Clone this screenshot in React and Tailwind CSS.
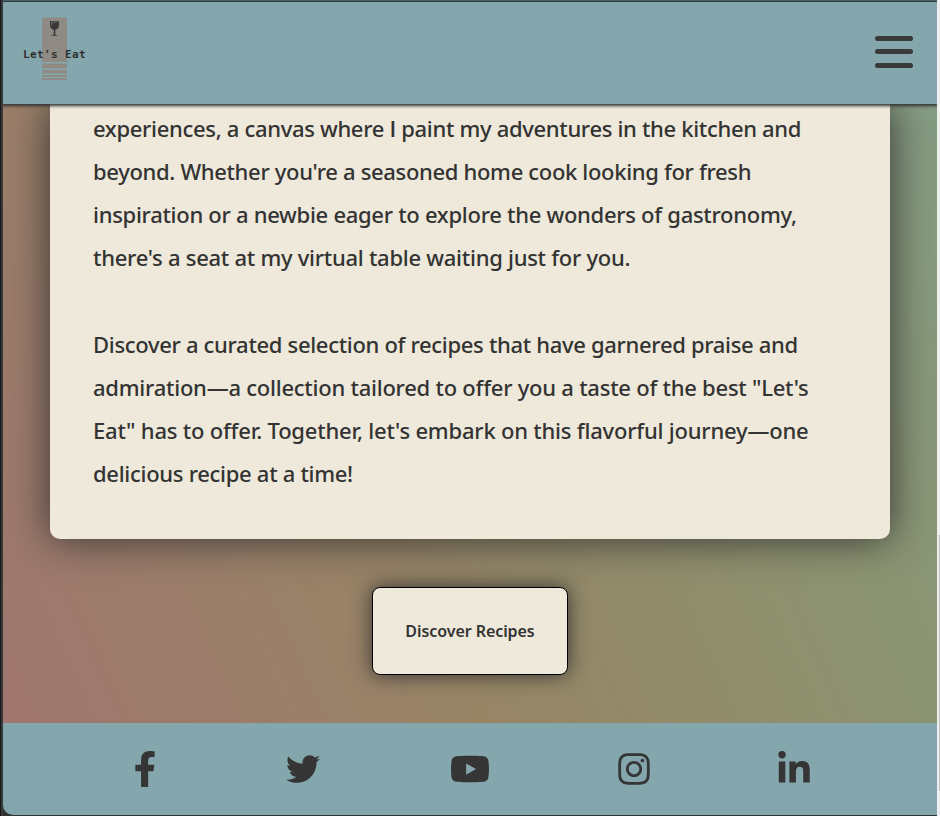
import { FaFacebookF, FaTwitter, FaYoutube, FaInstagram, FaLinkedinIn } from "react-icons/fa";

const intro = [
  ["beyond. Whether you're a seasoned home cook looking for fresh", "tracking-[-0.33px]"],
  ["inspiration or a newbie eager to explore the wonders of gastronomy,", "tracking-[-0.285px]"],
  ["there's a seat at my virtual table waiting just for you.", "tracking-[-0.265px]"],
];

const invite = [
  ["Discover a curated selection of recipes that have garnered praise and", "tracking-[-0.315px]"],
  ["admiration—a collection tailored to offer you a taste of the best \"Let's", "tracking-[-0.24px]"],
  ["Eat\" has to offer. Together, let's embark on this flavorful journey—one", "tracking-[-0.21px]"],
  ["delicious recipe at a time!", "tracking-[-0.29px]"],
];

function Paragraph({ lines }) {
  return (
    <p className="whitespace-nowrap">
      {lines.map(([text, tracking]) => (
        <span key={text} className="block h-[43px]">
          <span className={tracking}>{text}</span>
        </span>
      ))}
    </p>
  );
}

function Logo() {
  return (
    <svg className="mb-[9px] ml-[20px] h-[70px] w-[66px]" viewBox="0 0 66 70">
      <g fill="#8f8a83">
        <path d="M19 3.500h25v44.500H19zM19 49.500h25v5H19zM19 56h25v3.500H19zM19 61h25v2H19zM19 64h25v2H19z" />
      </g>
      <path d="M27.200 7h8.600c.7 4.800 0 8-3.500 8.700V20.500l2.700 1.200h-7.200L30.700 20.500v-4.800c-3.500-.7-4.200-3.900-3.500-8.700z" fill="#373737" />
      <path d="M28.700 8.500l-.2 3M28.500 8.200h6" stroke="#7f8b8c" strokeWidth=".7" fill="none" />
      <text x="0" y="44" textLength="62.5" fill="#303030" fontSize="11" fontWeight="700" fontFamily="'DejaVu Sans Mono', monospace">Let's Eat</text>
    </svg>
  );
}

export default function App() {
  return (
    <div className="flex h-[816px] w-[940px] overflow-hidden bg-[#303234] font-['Noto_Sans',sans-serif] text-[#333]">
      <div className="w-[3px] shrink-0 border-l border-[#181818] bg-[#38393b]" />
      <div className="flex h-[815px] w-[934px] shrink-0 flex-col overflow-hidden rounded-bl-[10px]">
        <div className="h-px shrink-0 bg-[#588387]" />
        <header className="relative z-10 flex h-[103px] shrink-0 items-center justify-between border-t border-[#333b3c] bg-[#84a7ad] pr-6 shadow-[0_1px_3px_1px_#333]">
          <Logo />
          <div className="mb-[3px] flex w-[38px] flex-col gap-[8.500px]">
            <span className="h-[5px] rounded-full bg-[#3a3a3a]" />
            <span className="h-[5px] rounded-full bg-[#3a3a3a]" />
            <span className="h-[5px] rounded-full bg-[#3a3a3a]" />
          </div>
        </header>
        <main className="flex h-[619px] shrink-0 flex-col items-center bg-[linear-gradient(66deg,#a0766f_0%,#978465_39%,#8c9471_77%,#849c83_100%)]">
          <article className="h-[435px] w-[840px] shrink-0 rounded-b-[10px] bg-[#eee9da] pl-[43px] pt-[3px] text-[22px] font-[540] leading-[43px] shadow-[0_0_40px_#333]">
            <p className="h-[43px] whitespace-nowrap tracking-[-0.32px]">
              experiences, a canvas where <span className="font-['Open_Sans']">I</span> paint my adventures in the kitchen and
            </p>
            <Paragraph lines={intro} />
            <div className="h-[44px]" />
            <Paragraph lines={invite} />
          </article>
          <button className="mt-12 h-[88px] w-[196px] rounded-[8px] border border-black bg-[#eee9da] text-[16px] font-[560] shadow-[0_0_20px_#333]">
            <span className="whitespace-nowrap tracking-[-0.07px]">Discover Recipes</span>
          </button>
        </main>
        <footer className="flex h-[92px] shrink-0 items-center bg-[#84a7ad] pl-[124px] text-[#353535]">
          <FaFacebookF className="size-9" />
          <FaTwitter className="ml-[123px] size-[34px]" />
          <FaYoutube className="ml-[130px] size-10" />
          <FaInstagram className="ml-[126px] size-9" />
          <FaLinkedinIn className="ml-[124px] size-9" />
        </footer>
      </div>
      <div className="flex w-[3px] shrink-0 flex-col bg-[#efefef]">
        <div className="mt-[535px] ml-[2px] h-[256px] bg-[#c1c1c1]" />
      </div>
    </div>
  );
}
